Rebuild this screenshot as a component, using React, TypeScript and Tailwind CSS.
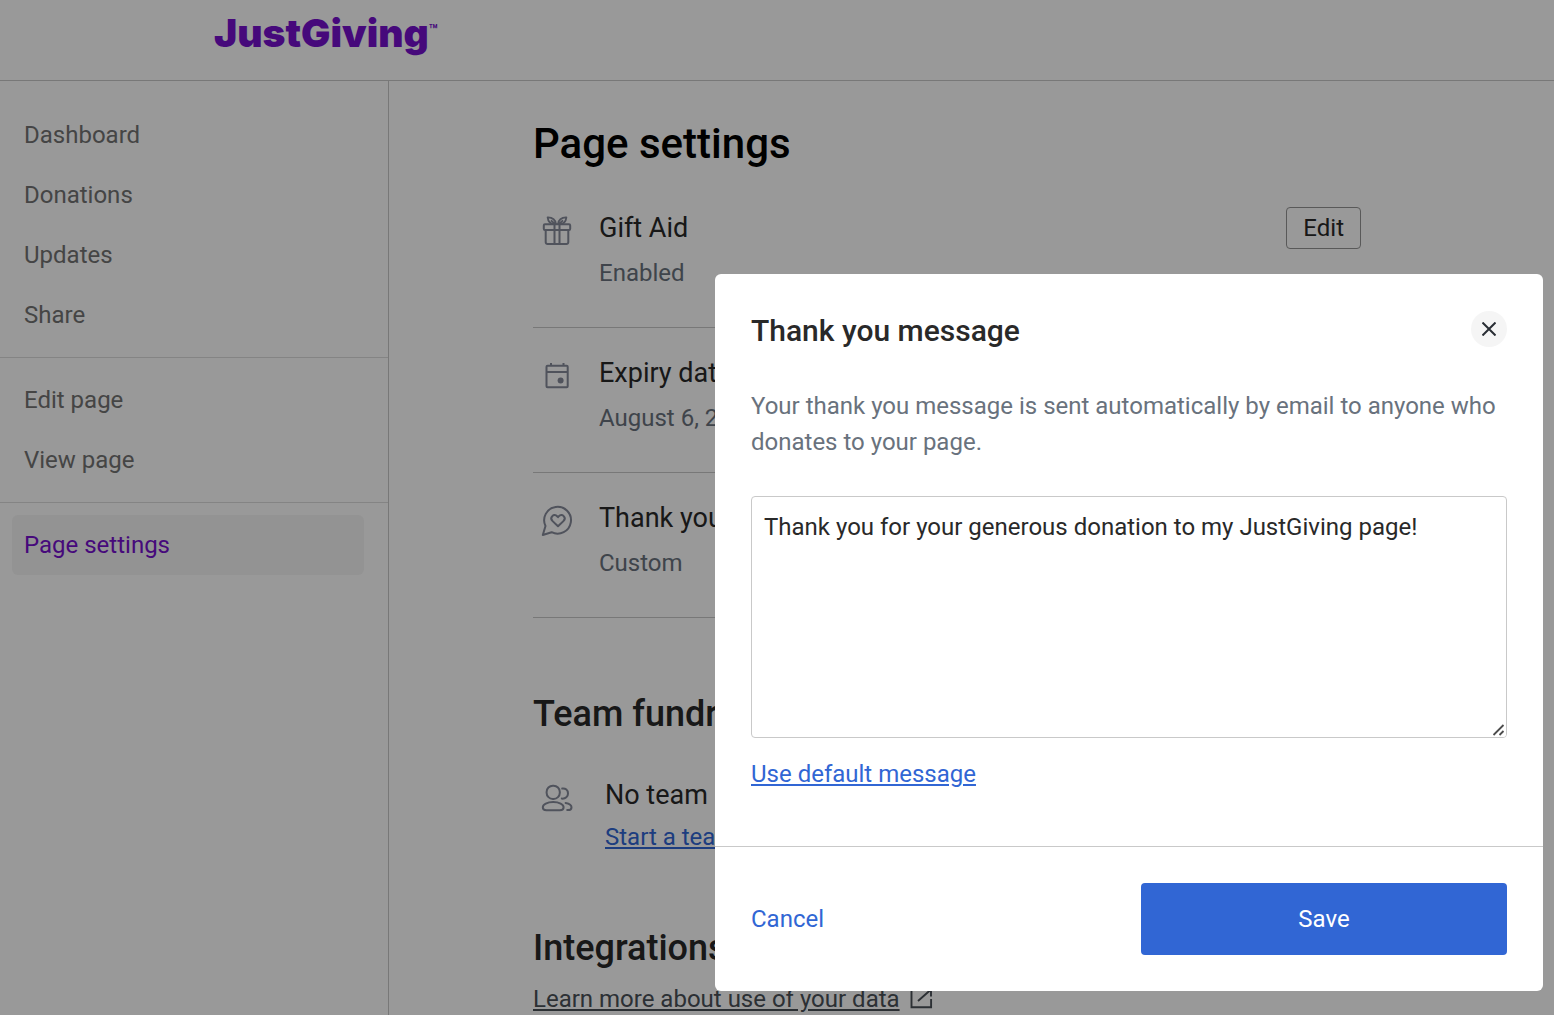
import type { ReactNode } from 'react';

function Logo() {
  return (
    <a href="#home" className="ml-[214px] flex items-start font-[Inter,sans-serif] text-[#7510ce]">
      <span className="text-[39px] leading-[66px] font-black">JustGiving</span>
      <span className="mt-[18px] text-sm leading-6 font-bold">™</span>
    </a>
  );
}

function GiftIcon() {
  return (
    <svg width="30" height="32" viewBox="0 0 30 32" fill="none" stroke="currentColor" strokeWidth="2" strokeLinejoin="round">
      <rect x="1.8" y="9.2" width="26.4" height="5.8" rx="1.2" />
      <path d="M3.7 15v12.2a1.8 1.8 0 0 0 1.8 1.8h19a1.8 1.8 0 0 0 1.8-1.8V15M12.5 9.2V29M17.5 9.2V29" />
      <path
        d="M14 9.2C13.800 5.200 10.600 2.200 5.600 2.400c.5 3.800 2.900 6.400 6.200 6.800M16 9.200c.2-4 3.400-7 8.400-6.800-.5 3.800-2.900 6.400-6.200 6.800M9 5.400l4.200 3.800M21 5.400l-4.200 3.800"
        strokeWidth="1.8"
      />
    </svg>
  );
}

function CalendarIcon() {
  return (
    <svg width="30" height="32" viewBox="0 0 30 32" fill="none" stroke="currentColor" strokeWidth="2" strokeLinejoin="round">
      <rect x="4.5" y="5.7" width="21.2" height="21.6" rx="1" />
      <path d="M4.5 12h21.2M9 3v2.7M21.5 3v2.7" />
      <circle cx="18.6" cy="20.6" r="3" fill="currentColor" stroke="none" />
    </svg>
  );
}

function MessageHeartIcon() {
  return (
    <svg
      width="32"
      height="32"
      viewBox="0 0 32 32"
      fill="none"
      stroke="currentColor"
      strokeWidth="2"
      strokeLinejoin="round"
      strokeLinecap="round"
    >
      <path d="M1.8 30 4.5 21A13.4 13.4 0 1 1 10.6 27.2Z" />
      <path d="m17 21.3-5.400-5.200c-1.600-1.600-1.600-3.700-.3-5 1.400-1.400 3.500-1.300 4.800.1l.9 1 .9-1c1.300-1.400 3.400-1.500 4.800-.1 1.300 1.300 1.300 3.400-.3 5z" />
    </svg>
  );
}

function TeamIcon() {
  return (
    <svg width="32" height="32" viewBox="0 0 32 32" fill="none" stroke="currentColor" strokeWidth="2" strokeLinecap="round">
      <rect x="5.6" y="3.7" width="13.2" height="13.2" rx="6.2" />
      <path d="M21.2 6.500c3.400-.5 5.800 1.600 5.800 4.900 0 3.300-2.400 5.500-6.200 5.200" />
      <path d="M12.200 20c6 0 10.400 2.400 10.400 5.200 0 1.900-1.300 3-3.600 3H5.400c-2.300 0-3.600-1.100-3.600-3C1.800 22.400 6.200 20 12.200 20z" />
      <path d="M24.600 20.900c3.500.6 5.900 2.200 5.900 4.300 0 1.800-1.300 2.900-3.500 2.900h-.8" />
    </svg>
  );
}

function ExternalIcon() {
  return (
    <svg width="24" height="24" viewBox="0 0 24 24" fill="none" stroke="currentColor" strokeWidth="1.9">
      <path d="M10 2.5H2.500v17.700h19.600V12M14 2.500h8v7M22 2.500 9 14" />
    </svg>
  );
}

function NavItem({ label, active = false }: { label: string; active?: boolean }) {
  return (
    <a
      href="#nav"
      aria-current={active ? 'page' : undefined}
      className={
        active
          ? 'mr-6 ml-3 block rounded-md bg-[#f5f5f5] px-3 py-3 leading-9 text-[#7510ce]'
          : 'mr-6 ml-3 block px-3 py-3 leading-9 text-[#737373]'
      }
    >
      {label}
    </a>
  );
}

function Sidebar() {
  return (
    <nav className="w-[389px] shrink-0 border-r border-[#c9c9c9] pt-6 text-2xl">
      <NavItem label="Dashboard" />
      <NavItem label="Donations" />
      <NavItem label="Updates" />
      <NavItem label="Share" />
      <hr className="my-3 border-[#dcdcdc]" />
      <NavItem label="Edit page" />
      <NavItem label="View page" />
      <hr className="my-3 border-[#dcdcdc]" />
      <NavItem label="Page settings" active />
    </nav>
  );
}

function SettingRow({ icon, title, value }: { icon: ReactNode; title: string; value: string }) {
  return (
    <li className="flex items-start border-b border-[#c9c9c9] pt-[27px] pb-9">
      <span className="mt-[5px] flex w-12 justify-center text-[#858a9a]">{icon}</span>
      <div className="ml-[18px] flex-1">
        <h3 className="text-[27px] leading-9 text-[#292929]">{title}</h3>
        <p className="mt-[9px] text-2xl leading-9 text-[#69727d]">{value}</p>
      </div>
      <button
        type="button"
        className="-mt-[3px] h-[42px] rounded border border-[#949494] px-4 text-2xl leading-9 text-[#292929]"
      >
        Edit
      </button>
    </li>
  );
}

function PageSettings() {
  return (
    <main className="min-w-0 flex-1 pt-9 pr-[193px] pl-36">
      <h1 className="text-[42px] leading-[54px] font-medium text-black">Page settings</h1>
      <ul className="mt-3">
        <SettingRow icon={<GiftIcon />} title="Gift Aid" value="Enabled" />
        <SettingRow icon={<CalendarIcon />} title="Expiry date" value="August 6, 2025" />
        <SettingRow icon={<MessageHeartIcon />} title="Thank you message" value="Custom" />
      </ul>

      <h2 className="mt-[72px] text-4xl leading-[48px] font-medium text-[#292929]">Team fundraising</h2>
      <div className="mt-[39px] flex items-start">
        <span className="mt-[5px] flex w-12 justify-center text-[#858a9a]">
          <TeamIcon />
        </span>
        <div className="ml-6">
          <h3 className="text-[27px] leading-9 text-[#292929]">No team</h3>
          <a href="#team" className="mt-[6px] block text-2xl leading-9 text-[#3166d4] underline">
            Start a team
          </a>
        </div>
      </div>

      <h2 className="mt-[69px] text-4xl leading-[48px] font-medium text-[#292929]">Integrations</h2>
      <a href="#data" className="mt-[9px] flex items-center gap-[9px] text-2xl leading-9 text-[#4a5058]">
        <span className="underline">Learn more about use of your data</span>
        <ExternalIcon />
      </a>
    </main>
  );
}

function MessageField() {
  return (
    <div className="relative mt-9">
      <textarea
        aria-label="Thank you message"
        aria-describedby="dialog-text"
        defaultValue="Thank you for your generous donation to my JustGiving page!"
        className="block h-[242px] w-full resize-y rounded border border-[#c9c9c9] px-3 py-3 leading-9 text-[#292929]"
      />
      {/* larger grip drawn over the native one */}
      <svg
        className="pointer-events-none absolute right-px bottom-px rounded-br-[3px] bg-white"
        width="14"
        height="14"
        viewBox="0 0 14 14"
        fill="none"
        stroke="#4c4c4c"
        strokeWidth="1.8"
      >
        <path d="M1.500 12 11.500 2M7.500 12l4-4" />
      </svg>
    </div>
  );
}

function ThankYouDialog() {
  return (
    <div
      role="dialog"
      aria-modal="true"
      aria-labelledby="dialog-title"
      className="absolute right-[11px] bottom-6 w-[828px] max-w-full rounded-md bg-white text-2xl"
    >
      <div className="px-9 pt-9 pb-[54px]">
        <div className="flex items-start justify-between">
          <h2 id="dialog-title" className="text-3xl leading-[42px] font-medium text-[#292929]">
            Thank you message
          </h2>
          <button
            type="button"
            aria-label="Close"
            className="mt-px flex size-9 items-center justify-center rounded-full bg-[#f5f5f5] text-[#292e35]"
          >
            <svg width="14" height="14" viewBox="0 0 14 14" fill="none" stroke="currentColor" strokeWidth="2">
              <path d="M.5.5l13 13M13.5.5l-13 13" />
            </svg>
          </button>
        </div>
        <p id="dialog-text" className="mt-9 leading-9 text-[#69727d]">
          Your thank you message is sent automatically by email to anyone who donates to your page.
        </p>
        <MessageField />
        <a href="#default" className="mt-[18px] block leading-9 text-[#3166d4] underline">
          Use default message
        </a>
      </div>
      <div className="flex items-center justify-between border-t border-[#c9c9c9] p-9">
        <button type="button" className="text-[#3166d4]">
          Cancel
        </button>
        <button type="button" className="h-[72px] w-[366px] rounded bg-[#3166d4] text-white">
          Save
        </button>
      </div>
    </div>
  );
}

export default function App() {
  return (
    <div className="relative h-screen overflow-hidden bg-white font-[Roboto,sans-serif]">
      <div className="flex min-h-full flex-col">
        <header className="h-[81px] shrink-0 border-b border-[#c9c9c9]">
          <Logo />
        </header>
        <div className="flex flex-1">
          <Sidebar />
          <PageSettings />
        </div>
      </div>
      <div className="absolute inset-0 bg-black/40">
        <ThankYouDialog />
      </div>
    </div>
  );
}
